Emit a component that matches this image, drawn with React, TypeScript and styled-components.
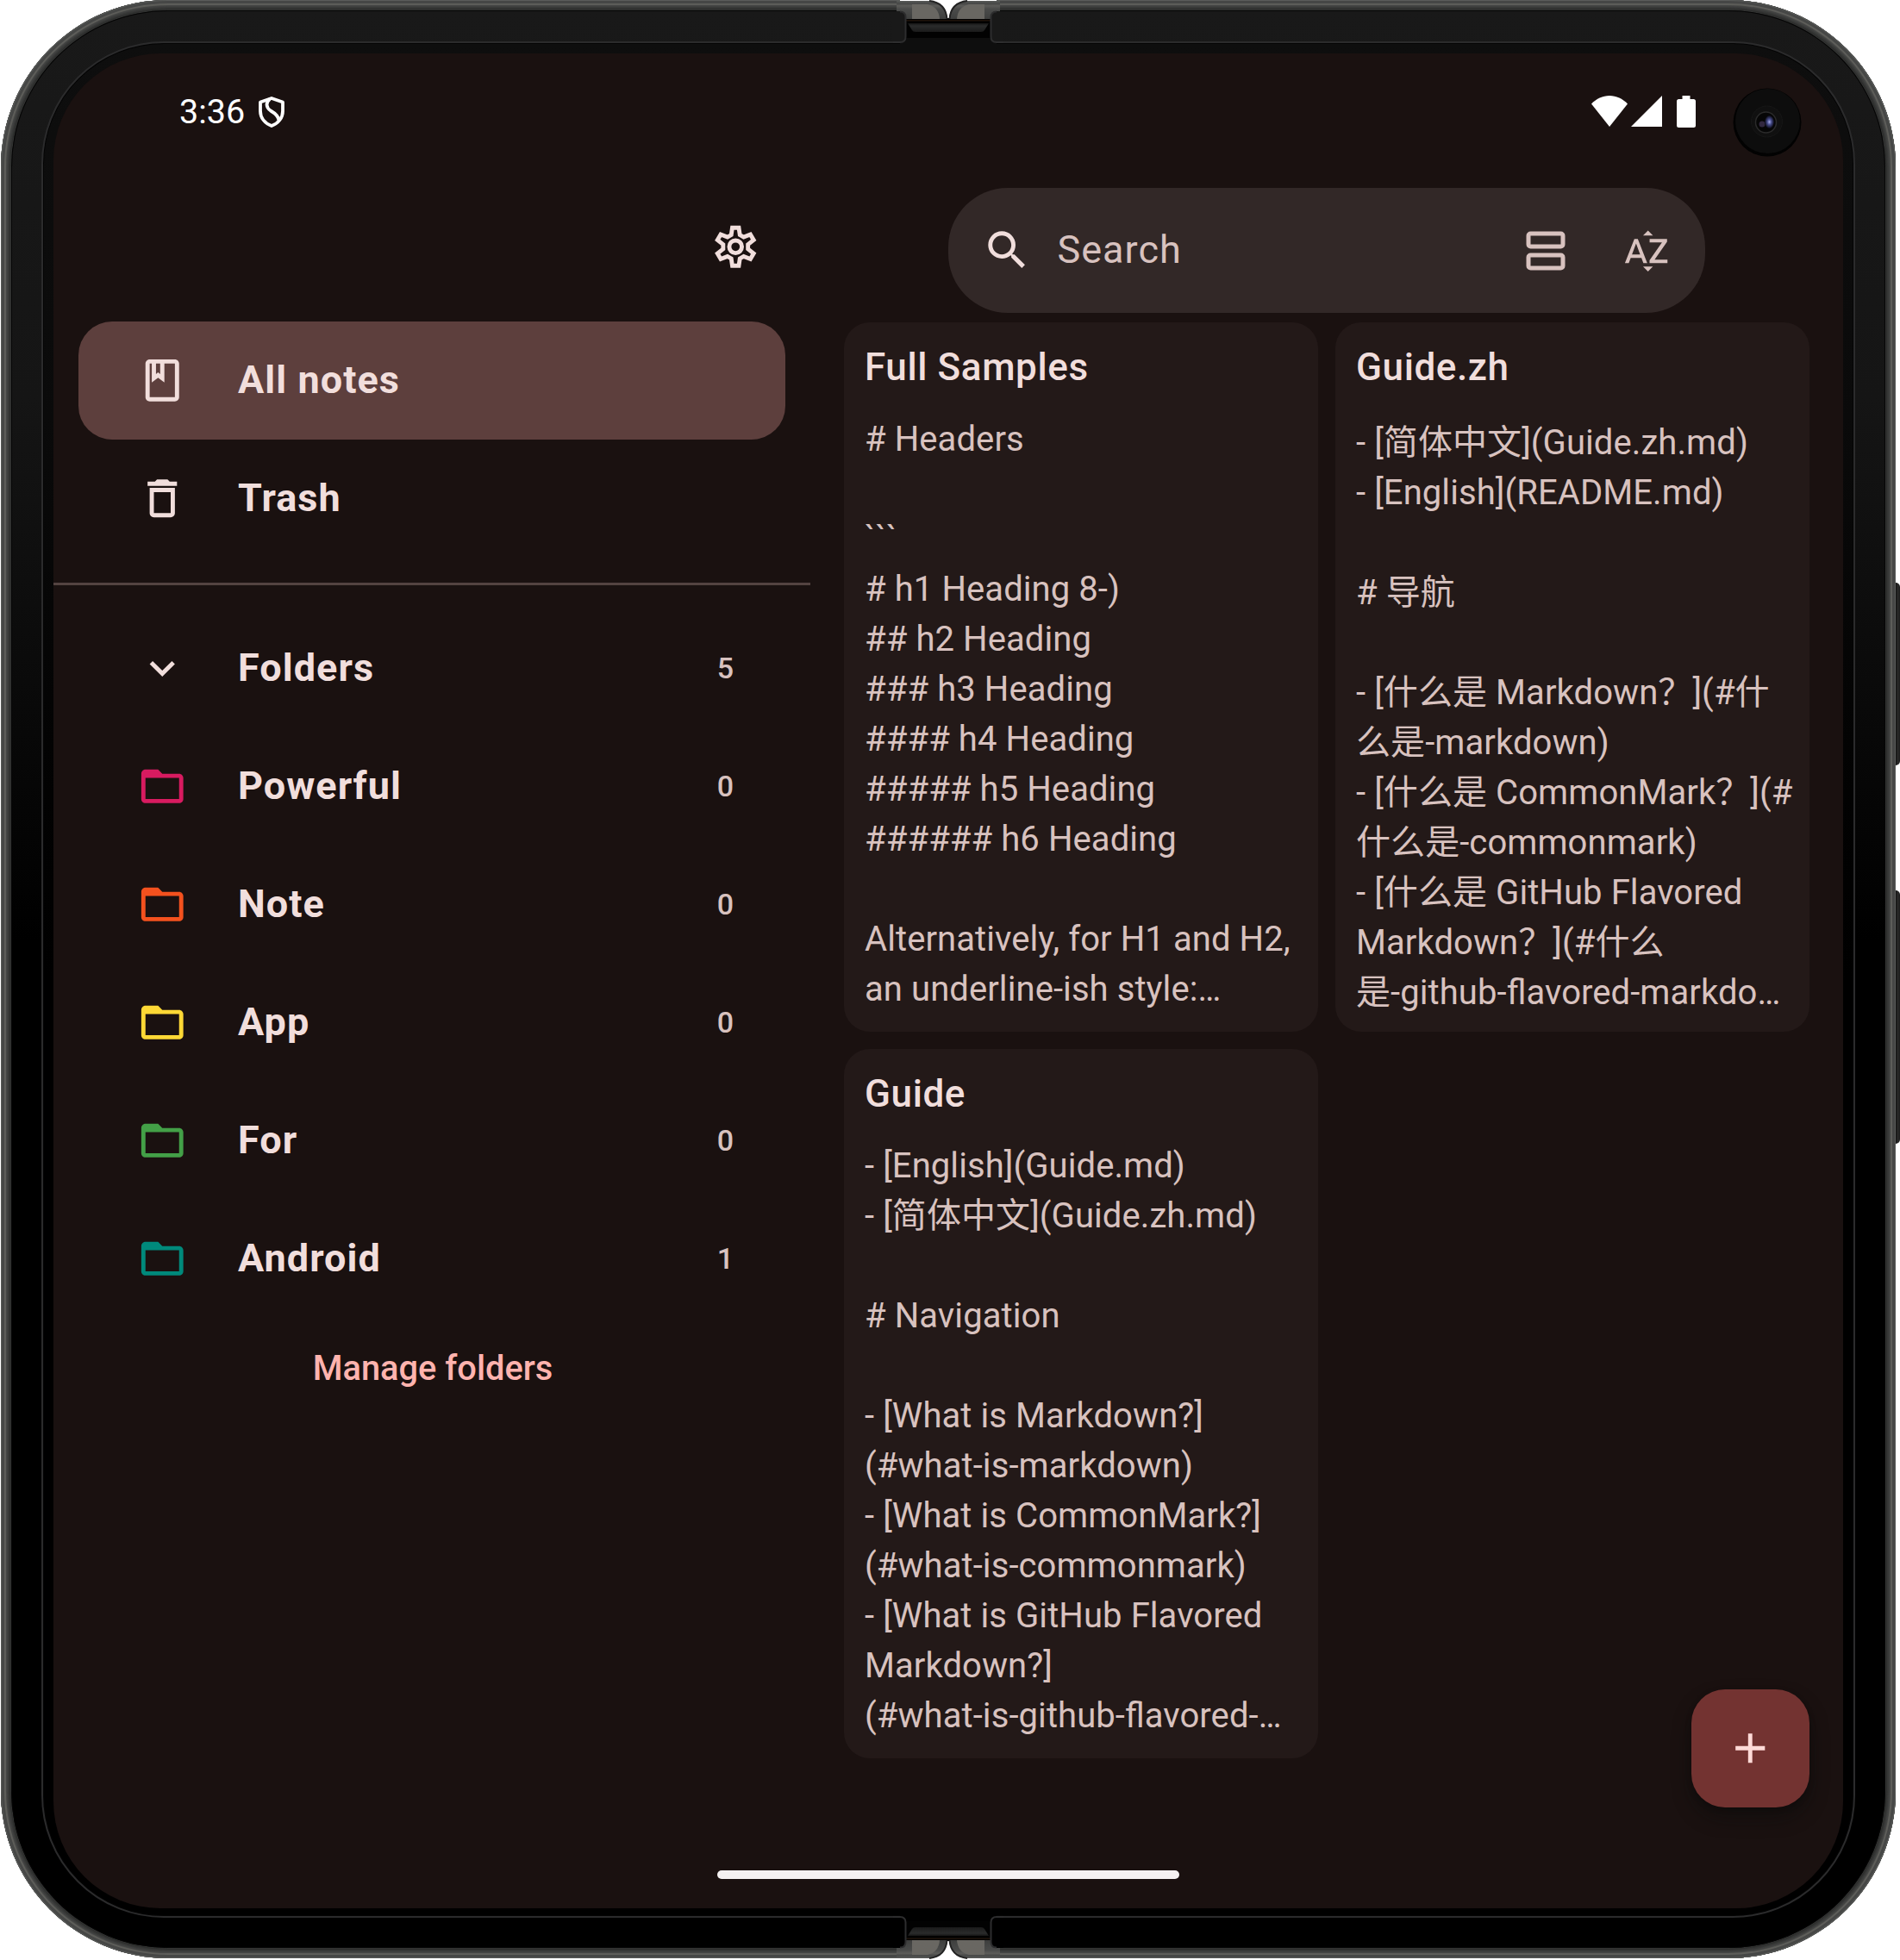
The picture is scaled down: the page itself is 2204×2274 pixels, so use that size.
import React from 'react';
import styled, { createGlobalStyle } from 'styled-components';
import {
  MdAdd,
  MdDeleteOutline,
  MdFolderOpen,
  MdKeyboardArrowDown,
  MdOutlineBook,
  MdSearch,
  MdSortByAlpha,
} from 'react-icons/md';

const color = {
  screen: '#1a1110',
  card: '#231918',
  search: '#322827',
  selected: '#5d3f3d',
  text: '#f1dedc',
  muted: '#d8c2bf',
  accent: '#ffb3ae',
  divider: '#534341',
  fab: '#733331',
  onFab: '#ffdad7',
};

const Global = createGlobalStyle`
  body { margin: 0; background: #fff; }
  * { box-sizing: border-box; }
  #root {
    font-family: Roboto, 'Noto Sans CJK SC', sans-serif;
    color: ${color.text};
    -webkit-font-smoothing: antialiased;
  }
`;

const Stage = styled.div`
  width: 2204px;
  height: 2274px;
  padding-left: 1px;
  overflow: hidden;
`;

const Device = styled.div`
  position: relative;
  width: 2198px;
  height: 2272px;
  padding: 12px;
  border-radius: 194px;
  background: #333433;
  box-shadow: inset 0 0 0 1px #5a5c5a, inset 0 0 0 4px #464746, inset 0 0 1px 6px #5f5f5b,
    inset 0 0 1px 8px #424342, inset 0 0 1px 10px #383938, inset 0 0 0 11px #2b2c2b;
`;

const Bezel = styled.div`
  height: 100%;
  padding: 36px 35px 35px;
  border-radius: 182px;
  background: linear-gradient(#191919, #151515 20%, #0c0c0c 32%, #000 48%);
  box-shadow: inset 0 0 0 1px #050505;
`;

const Glass = styled.div`
  height: 100%;
  padding: 12px 11px 9px 12px;
  border: 2px solid #2b2b2c;
  border-radius: 142px;
  background: linear-gradient(#0e0e0e, #0a0a0a 20%, #020202 40%, #000 50%);
  box-shadow: inset 0 0 0 1px #040404;
`;

const Screen = styled.div`
  position: relative;
  display: flex;
  flex-direction: column;
  width: 2076px;
  height: 2152px;
  border-radius: 124px;
  background: ${color.screen};
  overflow: hidden;
`;

const SideKey = styled.div<{ $top: number; $height: number }>`
  position: absolute;
  left: 2198px;
  top: ${(p) => p.$top}px;
  width: 5px;
  height: ${(p) => p.$height}px;
  border-radius: 0 5px 5px 0;
  background: linear-gradient(90deg, #111, #2a2a29 50%, #1b1b1b);
`;

const Hinge = styled.svg<{ $bottom?: boolean }>`
  position: absolute;
  left: 999px;
  width: 200px;
  height: 62px;
  ${(p) => (p.$bottom ? 'bottom: -1px; transform: scaleY(-1);' : 'top: 0;')}
`;

const Camera = styled.svg`
  position: absolute;
  left: 1948px;
  top: 40px;
  width: 80px;
  height: 80px;
`;

const StatusBar = styled.header`
  display: flex;
  align-items: center;
  height: 136px;
  padding: 0 171px 0 146px;
  color: #fff;
`;

const Clock = styled.span`
  font-size: 39.5px;
  line-height: 46px;
  margin-right: 16px;
`;

const StatusIcons = styled.div`
  display: flex;
  align-items: center;
  margin-left: auto;
  padding-bottom: 2px;
`;

const StatusGap = styled.span<{ $width: number }>`
  width: ${(p) => p.$width}px;
`;

const Panes = styled.div`
  display: flex;
  flex: 1;
`;

const Sidebar = styled.nav`
  display: flex;
  flex-direction: column;
  width: 878px;
`;

const SidebarTop = styled.div`
  display: flex;
  justify-content: flex-end;
  height: 175px;
  padding: 59px 57.5px 0 0;
`;

const NavGroup = styled.div`
  display: flex;
  flex-direction: column;
  padding: 0 29px;
`;

const NavRow = styled.div<{ $selected?: boolean }>`
  display: flex;
  align-items: center;
  height: 137px;
  padding: 0 60px 0 68px;
  border-radius: 39px;
  background: ${(p) => (p.$selected ? color.selected : 'transparent')};
`;

const NavIcon = styled.span<{ $tint?: string }>`
  display: flex;
  margin-right: 58.5px;
  color: ${(p) => p.$tint ?? color.text};
`;

const NavLabel = styled.span`
  flex: 1;
  padding-bottom: 2px;
  font-size: 45px;
  font-weight: 700;
  line-height: 58px;
  letter-spacing: 1.05px;
`;

const NavCount = styled.span`
  padding-bottom: 2px;
  font-size: 34px;
  font-weight: 500;
  line-height: 44px;
  color: ${color.muted};
`;

const Divider = styled.div`
  height: 3px;
  margin: 29px 0 28px;
  background: ${color.divider};
`;

const ManageButton = styled.button`
  align-self: center;
  height: 117px;
  padding: 0 28px 0 30px;
  border: 0;
  background: none;
  font: 500 39.8px/58px Roboto, sans-serif;
  color: ${color.accent};
`;

const Content = styled.main`
  display: flex;
  flex-direction: column;
  flex: 1;
  padding: 20px 39px 0;
`;

const SearchBar = styled.div`
  display: flex;
  align-items: center;
  align-self: center;
  width: 878px;
  height: 145px;
  padding: 0 39px;
  border-radius: 69px;
  background: ${color.search};
  color: ${color.muted};
`;

const SearchHint = styled.span`
  flex: 1;
  margin-left: 29px;
  padding-bottom: 1px;
  font-size: 45px;
  line-height: 58px;
  letter-spacing: 1px;
`;

const SearchActions = styled.div`
  display: flex;
  gap: 58px;
  padding-top: 2px;
`;

const NoteGrid = styled.div`
  display: grid;
  grid-template-columns: 550px 550px;
  gap: 20px;
  margin-top: 11px;
`;

const NoteCard = styled.article`
  height: 823px;
  padding: 22px 24px;
  border-radius: 30px;
  background: ${color.card};
`;

const NoteTitle = styled.h2`
  margin: 0;
  font-size: 44px;
  font-weight: 500;
  line-height: 60px;
  letter-spacing: 0.6px;
`;

const NoteBody = styled.div<{ $shift: number }>`
  padding-top: ${(p) => 25 + p.$shift}px;
  font-size: 40px;
  line-height: 58px;
  letter-spacing: 0.08px;
  font-feature-settings: 'liga' 1;
  color: ${color.muted};
`;

const NoteLine = styled.div`
  height: 58px;
  white-space: pre;
`;

const Fab = styled.button`
  position: absolute;
  right: 39px;
  bottom: 117px;
  display: flex;
  align-items: center;
  justify-content: center;
  width: 137px;
  height: 137px;
  border: 0;
  border-radius: 39px;
  background: ${color.fab};
  color: ${color.onFab};
  box-shadow: 0 12px 22px rgba(8, 10, 10, 0.4), 0 2px 6px rgba(0, 0, 0, 0.25);
`;

const HomeHandle = styled.div`
  position: absolute;
  left: 770px;
  bottom: 34px;
  width: 536px;
  height: 10px;
  border-radius: 5px;
  background: #f4f1f1;
`;

const folders = [
  { name: 'Powerful', count: 0, tint: '#d81b60' },
  { name: 'Note', count: 0, tint: '#f4511e' },
  { name: 'App', count: 0, tint: '#fdd835' },
  { name: 'For', count: 0, tint: '#43a047' },
  { name: 'Android', count: 1, tint: '#00897b' },
];

const notes = [
  {
    title: 'Full Samples',
    shift: 0,
    lines: [
      '# Headers',
      '',
      '```',
      '# h1 Heading 8-)',
      '## h2 Heading',
      '### h3 Heading',
      '#### h4 Heading',
      '##### h5 Heading',
      '###### h6 Heading',
      '',
      'Alternatively, for H1 and H2,',
      'an underline-ish style:…',
    ],
  },
  {
    title: 'Guide.zh',
    shift: 4,
    lines: [
      '- [简体中文](Guide.zh.md)',
      '- [English](README.md)',
      '',
      '# 导航',
      '',
      '- [什么是 Markdown？](#什',
      '么是-markdown)',
      '- [什么是 CommonMark？](#',
      '什么是-commonmark)',
      '- [什么是 GitHub Flavored',
      'Markdown？](#什么',
      '是-github-flavored-markdo…',
    ],
  },
  {
    title: 'Guide',
    shift: 0,
    lines: [
      '- [English](Guide.md)',
      '- [简体中文](Guide.zh.md)',
      '',
      '# Navigation',
      '',
      '- [What is Markdown?]',
      '(#what-is-markdown)',
      '- [What is CommonMark?]',
      '(#what-is-commonmark)',
      '- [What is GitHub Flavored',
      'Markdown?]',
      '(#what-is-github-flavored-…',
    ],
  },
];

const ICON = 58.5;

const polar = (radius: number, degrees: number) => {
  const a = (degrees * Math.PI) / 180;
  return `${(radius * Math.sin(a)).toFixed(3)},${(-radius * Math.cos(a)).toFixed(3)}`;
};

const gearOutline = [0, 60, 120, 180, 240, 300]
  .flatMap((a) => [polar(6, a - 20), polar(9.18, a - 9.7), polar(9.18, a + 9.7), polar(6, a + 20)])
  .join(' ');

const GearIcon = () => (
  <svg width={ICON} height={ICON} viewBox="-12 -12 24 24" fill="none" stroke={color.text} strokeWidth="2">
    <polygon points={gearOutline} />
    <circle r="3" />
  </svg>
);

const AgendaIcon = () => (
  <svg width={ICON} height={ICON} viewBox="0 0 58.5 58.5" fill="none" stroke="currentColor" strokeWidth="5">
    <rect x="9" y="9" width="40" height="15" rx="2.5" />
    <rect x="9" y="34" width="40" height="15" rx="2.5" />
  </svg>
);

const ShieldIcon = () => (
  <svg width="30" height="36" viewBox="0 0 30 36" fill="none" stroke="#fff" strokeWidth="3.8" strokeLinejoin="round">
    <path d="M15 2 28 6.5V17c0 7.5-5 14-13 17C7 31 2 24.5 2 17V6.5z" />
    <path d="M13 3C8 7 8.5 13 14 16.5c6 3.5 9 7 9.5 11" />
  </svg>
);

const WifiIcon = () => (
  <svg width="42" height="36" viewBox="0 0 42 36" fill="#fff">
    <path d="M21 36 0 9.5C6 3.5 13 0 21 0s15 3.5 21 9.5z" />
  </svg>
);

const SignalIcon = () => (
  <svg width="36" height="36" viewBox="0 0 36 36" fill="#fff">
    <path d="M36 0v36H0z" />
  </svg>
);

const BatteryIcon = () => (
  <svg width="22" height="37" viewBox="0 0 22 37" fill="#fff">
    <path d="M6.5 0h9v4H19.5Q22 4 22 6.5V34.5Q22 37 19.5 37H2.5Q0 37 0 34.5V6.5Q0 4 2.5 4h4z" />
  </svg>
);

const HingeArt = ({ bottom = false }: { bottom?: boolean }) => {
  const id = bottom ? 'hb' : 'ht';
  const plate = bottom ? '#000' : '#191919';
  const glass = bottom ? '#000' : '#0e0e0e';
  return (
    <Hinge $bottom={bottom} viewBox="0 0 200 62">
      <defs>
        <linearGradient id={`${id}m`} x1="0" y1="0" x2="0" y2="1">
          <stop offset="0" stopColor="#5a5c5a" />
          <stop offset=".15" stopColor="#464746" />
          <stop offset=".27" stopColor="#5c5c59" />
          <stop offset=".45" stopColor="#4a4b4a" />
          <stop offset="1" stopColor="#3e3f3e" />
        </linearGradient>
        <linearGradient id={`${id}b`} x1="0" y1="0" x2="0" y2="1">
          <stop offset="0" stopColor="#151515" />
          <stop offset=".3" stopColor="#2b2c2c" />
          <stop offset="1" stopColor="#1a1a1a" />
        </linearGradient>
      </defs>
      <rect x="44" y="0" width="112" height="24" fill="#fff" />
      <rect x="44" y="12" width="112" height="46" fill={glass} />
      <path d="M78 0h44v22H78z" fill="#fff" />
      <rect x="50" y="21" width="100" height="23" fill="#020202" />
      <rect x="50" y="23" width="100" height="1.5" fill="#1e120a" />
      <path d="M40 1H78Q97 3 99 22H40z" fill={`url(#${id}m)`} />
      <path d="M160 1H122Q103 3 101 22h59z" fill={`url(#${id}m)`} />
      <path d="M58 5H76Q89 8 90 22H58z" fill="#696762" />
      <path d="M142 5h-18Q111 8 110 22h32z" fill="#696762" />
      <path d="M78 1Q97 3 98.5 22M122 1Q103 3 101.5 22" fill="none" stroke="#222" strokeWidth="2" />
      <path d="M53 27h94l-5 8q-1 2-4 2H62q-3 0-4-2z" fill={`url(#${id}b)`} />
      <path d="M36 13h8q6.5 0 6.5 7v23q0 6.5-6.5 6.5h-8z" fill={plate} />
      <path d="M164 13h-8q-6.5 0-6.5 7v23q0 6.5 6.5 6.5h8z" fill={plate} />
      <path
        d="M36 49h8q6.5 0 6.5-6.5V20q0-6.5-6.5-6.5M164 49h-8q-6.5 0-6.5-6.5V20q0-6.5 6.5-6.5"
        fill="none"
        stroke="#2d2d2e"
        strokeWidth="2"
      />
    </Hinge>
  );
};

const CameraArt = () => (
  <Camera viewBox="0 0 80 80">
    <defs>
      <radialGradient id="lens">
        <stop offset="0" stopColor="#a5a9ea" />
        <stop offset=".45" stopColor="#454a88" />
        <stop offset="1" stopColor="#0a0a14" />
      </radialGradient>
    </defs>
    <circle cx="40" cy="40" r="39.5" fill="#020202" />
    <circle cx="40.5" cy="38.5" r="37.5" fill="#0d0d0d" />
    <circle cx="39.5" cy="39" r="18" fill="#101010" stroke="#171717" />
    <circle cx="38.5" cy="40" r="12" fill="#060606" stroke="#2a2a2a" strokeWidth="1.5" />
    <circle cx="34" cy="42" r="3.5" fill="#32283f" />
    <ellipse cx="42.500" cy="39.500" rx="5.500" ry="7.500" fill="url(#lens)" />
  </Camera>
);

export default function App() {
  return (
    <>
      <Global />
      <Stage>
        <Device>
          <Bezel>
            <Glass>
              <Screen>
                <StatusBar>
                  <Clock>3:36</Clock>
                  <ShieldIcon />
                  <StatusIcons>
                    <WifiIcon />
                    <StatusGap $width={4} />
                    <SignalIcon />
                    <StatusGap $width={17} />
                    <BatteryIcon />
                  </StatusIcons>
                </StatusBar>
                <Panes>
                  <Sidebar>
                    <SidebarTop>
                      <GearIcon />
                    </SidebarTop>
                    <NavGroup>
                      <NavRow $selected>
                        <NavIcon><MdOutlineBook size={ICON} /></NavIcon>
                        <NavLabel>All notes</NavLabel>
                      </NavRow>
                      <NavRow>
                        <NavIcon><MdDeleteOutline size={ICON} /></NavIcon>
                        <NavLabel>Trash</NavLabel>
                      </NavRow>
                    </NavGroup>
                    <Divider />
                    <NavGroup>
                      <NavRow>
                        <NavIcon><MdKeyboardArrowDown size={ICON} /></NavIcon>
                        <NavLabel>Folders</NavLabel>
                        <NavCount>5</NavCount>
                      </NavRow>
                      {folders.map((f) => (
                        <NavRow key={f.name}>
                          <NavIcon $tint={f.tint}><MdFolderOpen size={ICON} /></NavIcon>
                          <NavLabel>{f.name}</NavLabel>
                          <NavCount>{f.count}</NavCount>
                        </NavRow>
                      ))}
                    </NavGroup>
                    <ManageButton>Manage folders</ManageButton>
                  </Sidebar>
                  <Content>
                    <SearchBar>
                      <MdSearch size={ICON} color={color.text} />
                      <SearchHint>Search</SearchHint>
                      <SearchActions>
                        <AgendaIcon />
                        <MdSortByAlpha size={ICON} />
                      </SearchActions>
                    </SearchBar>
                    <NoteGrid>
                      {notes.map((n) => (
                        <NoteCard key={n.title}>
                          <NoteTitle>{n.title}</NoteTitle>
                          <NoteBody $shift={n.shift}>
                            {n.lines.map((line, i) => (
                              <NoteLine key={i}>{line}</NoteLine>
                            ))}
                          </NoteBody>
                        </NoteCard>
                      ))}
                    </NoteGrid>
                  </Content>
                </Panes>
                <CameraArt />
                <Fab><MdAdd size={ICON} /></Fab>
                <HomeHandle />
              </Screen>
            </Glass>
          </Bezel>
          <HingeArt />
          <HingeArt bottom />
          <SideKey $top={676} $height={212} />
          <SideKey $top={1033} $height={294} />
        </Device>
      </Stage>
    </>
  );
}
